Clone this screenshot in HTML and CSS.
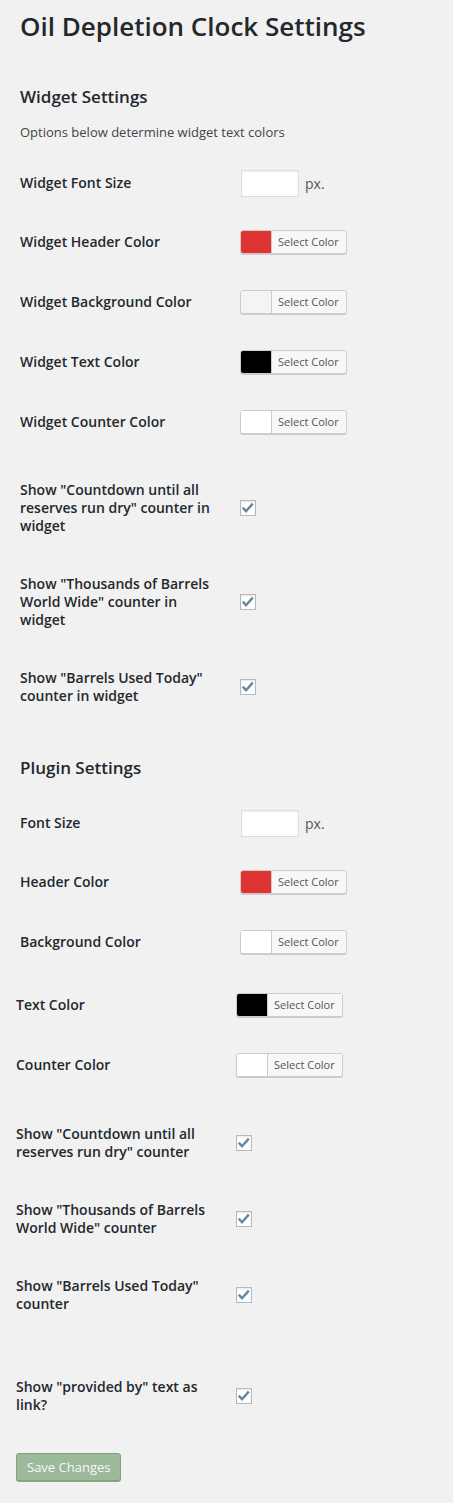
FILE: index.html
```html
<!DOCTYPE html>
<html lang="en">
<head>
<meta charset="utf-8">
<title>Oil Depletion Clock Settings</title>
<link rel="stylesheet" href="styles.css">
</head>
<body>
<div class="wrap">
  <h1 class="page-title">Oil Depletion Clock Settings</h1>

  <h2 class="section-title">Widget Settings</h2>
  <p class="desc">Options below determine widget text colors</p>

  <div class="form-table">
    <div class="row row-short">
      <div class="label">Widget Font Size</div>
      <div class="field"><span class="text-input"></span><span class="unit">px.</span></div>
    </div>
    <div class="row">
      <div class="label">Widget Header Color</div>
      <div class="field"><span class="color-btn"><span class="swatch red"></span><span class="btn-text">Select Color</span></span></div>
    </div>
    <div class="row">
      <div class="label">Widget Background Color</div>
      <div class="field"><span class="color-btn"><span class="swatch light"></span><span class="btn-text">Select Color</span></span></div>
    </div>
    <div class="row">
      <div class="label">Widget Text Color</div>
      <div class="field"><span class="color-btn"><span class="swatch black"></span><span class="btn-text">Select Color</span></span></div>
    </div>
    <div class="row">
      <div class="label">Widget Counter Color</div>
      <div class="field"><span class="color-btn"><span class="swatch white"></span><span class="btn-text">Select Color</span></span></div>
    </div>
  </div>

  <div class="form-table checks">
    <div class="row row-3">
      <div class="label">Show "Countdown until all reserves run dry" counter in widget</div>
      <div class="field"><span class="checkbox"><svg viewBox="0 0 16 16" width="16" height="16"><polyline points="2.8,7.6 6,11.2 12.8,3.6"/></svg></span></div>
    </div>
    <div class="row row-3">
      <div class="label">Show "Thousands of Barrels World Wide" counter in widget</div>
      <div class="field"><span class="checkbox"><svg viewBox="0 0 16 16" width="16" height="16"><polyline points="2.8,7.6 6,11.2 12.8,3.6"/></svg></span></div>
    </div>
    <div class="row row-2">
      <div class="label">Show "Barrels Used Today" counter in widget</div>
      <div class="field"><span class="checkbox"><svg viewBox="0 0 16 16" width="16" height="16"><polyline points="2.8,7.6 6,11.2 12.8,3.6"/></svg></span></div>
    </div>
  </div>

  <h2 class="section-title plugin-title">Plugin Settings</h2>

  <div class="form-table plugin-table">
    <div class="row row-short">
      <div class="label">Font Size</div>
      <div class="field"><span class="text-input"></span><span class="unit">px.</span></div>
    </div>
    <div class="row">
      <div class="label">Header Color</div>
      <div class="field"><span class="color-btn"><span class="swatch red"></span><span class="btn-text">Select Color</span></span></div>
    </div>
    <div class="row">
      <div class="label">Background Color</div>
      <div class="field"><span class="color-btn"><span class="swatch white"></span><span class="btn-text">Select Color</span></span></div>
    </div>
  </div>

  <div class="form-table shifted">
    <div class="row">
      <div class="label">Text Color</div>
      <div class="field"><span class="color-btn"><span class="swatch black"></span><span class="btn-text">Select Color</span></span></div>
    </div>
    <div class="row">
      <div class="label">Counter Color</div>
      <div class="field"><span class="color-btn"><span class="swatch white"></span><span class="btn-text">Select Color</span></span></div>
    </div>

    <div class="check-group">
      <div class="row row-2">
        <div class="label">Show "Countdown until all reserves run dry" counter</div>
        <div class="field"><span class="checkbox"><svg viewBox="0 0 16 16" width="16" height="16"><polyline points="2.8,7.6 6,11.2 12.8,3.6"/></svg></span></div>
      </div>
      <div class="row row-2">
        <div class="label">Show "Thousands of Barrels World Wide" counter</div>
        <div class="field"><span class="checkbox"><svg viewBox="0 0 16 16" width="16" height="16"><polyline points="2.8,7.6 6,11.2 12.8,3.6"/></svg></span></div>
      </div>
      <div class="row row-2">
        <div class="label">Show "Barrels Used Today" counter</div>
        <div class="field"><span class="checkbox"><svg viewBox="0 0 16 16" width="16" height="16"><polyline points="2.8,7.6 6,11.2 12.8,3.6"/></svg></span></div>
      </div>
    </div>

    <div class="row row-2 link-row">
      <div class="label">Show "provided by" text as link?</div>
      <div class="field"><span class="checkbox"><svg viewBox="0 0 16 16" width="16" height="16"><polyline points="2.8,7.6 6,11.2 12.8,3.6"/></svg></span></div>
    </div>

    <div class="submit">
      <button class="save-btn" type="button">Save Changes</button>
    </div>
  </div>
</div>
</body>
</html>
```

FILE: styles.css
```css
html, body {
  margin: 0;
  padding: 0;
  background: #f1f1f1;
}

body {
  font-family: "Open Sans", "Liberation Sans", sans-serif;
  color: #23282d;
  font-size: 13px;
}

.wrap {
  padding: 11px 0 20px 20px;
}

.page-title {
  margin: 0 0 45px 0;
  font-size: 26px;
  line-height: 30px;
  font-weight: 600;
  color: #23282d;
}

.section-title {
  margin: 0 0 15px 0;
  font-size: 17px;
  line-height: 22px;
  font-weight: 600;
  color: #23282d;
}

.plugin-title {
  margin-top: 32px;
}

.desc {
  margin: 0 0 13px 0;
  font-size: 13px;
  line-height: 18px;
  color: #444;
}

.form-table {
  display: flex;
  flex-direction: column;
}

.row {
  display: flex;
  align-items: center;
  height: 60px;
}

.row-short { height: 58px; }
.row-3 { height: 94px; }
.row-2 { height: 76px; }

.label {
  width: 200px;
  margin-right: 20px;
  font-size: 14px;
  line-height: 18px;
  font-weight: 600;
  color: #23282d;
}

.field {
  display: flex;
  align-items: center;
}

.checks {
  margin-top: 9px;
}

.shifted {
  margin-left: -4px;
  margin-top: 3px;
}

.check-group {
  margin-top: 10px;
}

.link-row {
  margin-top: 25px;
}

.text-input {
  display: block;
  width: 56px;
  height: 25px;
  margin-left: 1px;
  background: #fff;
  border: 1px solid #ddd;
  box-shadow: inset 0 1px 2px rgba(0, 0, 0, 0.07);
}

.unit {
  margin-left: 6px;
  font-size: 14px;
  color: #555;
}

.color-btn {
  display: flex;
  height: 22px;
  border: 1px solid #ccc;
  border-radius: 3px;
  background: #f7f7f7;
  box-shadow: 0 1px 0 #ccc;
  overflow: hidden;
}

.swatch {
  width: 30px;
  border-right: 1px solid #ccc;
}

.swatch.red { background: #dd3333; }
.swatch.light { background: #f4f4f4; }
.swatch.black { background: #000; }
.swatch.white { background: #fff; }

.btn-text {
  padding: 0 7px 0 6px;
  font-size: 11px;
  line-height: 22px;
  color: #555;
  background: #f7f7f7;
}

.checkbox {
  display: block;
  width: 14px;
  height: 14px;
  border: 1px solid #b4b9be;
  background: #fff;
  box-shadow: inset 0 1px 2px rgba(0, 0, 0, 0.1);
  position: relative;
}

.checkbox svg {
  position: absolute;
  left: -1px;
  top: -1px;
  fill: none;
  stroke: #64879f;
  stroke-width: 2.4;
  stroke-linecap: butt;
  stroke-linejoin: miter;
}

.submit {
  margin-top: 19px;
}

.save-btn {
  display: block;
  height: 28px;
  padding: 0 10px;
  font-family: "Open Sans", "Liberation Sans", sans-serif;
  font-size: 13px;
  line-height: 26px;
  color: #f4f8f4;
  background: #9cb99c;
  border: 1px solid #7fa27f;
  border-radius: 3px;
  box-shadow: 0 1px 0 #86a886;
}
```
